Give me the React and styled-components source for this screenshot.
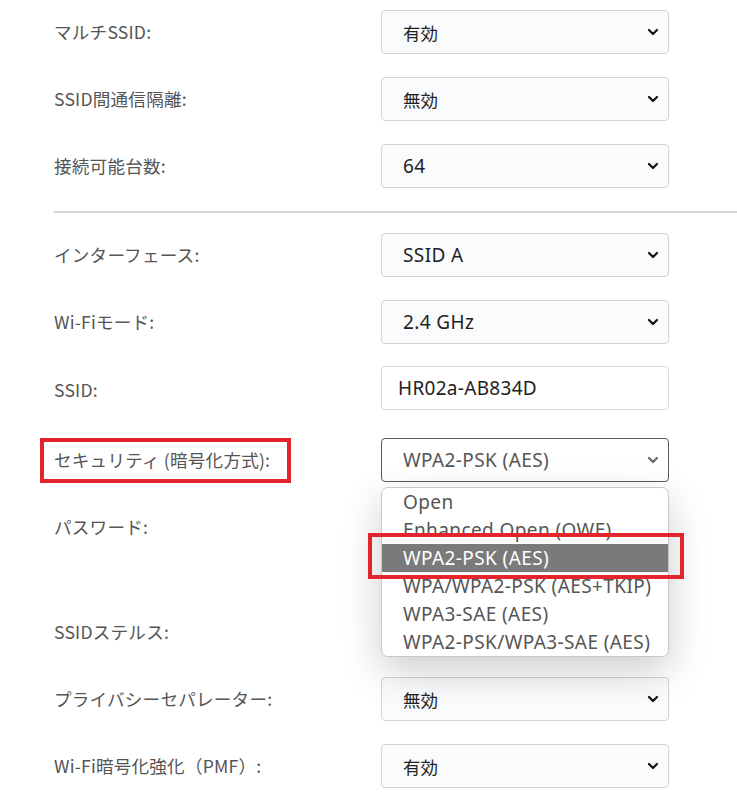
import React from "react";
import styled, { createGlobalStyle } from "styled-components";

const GlobalStyle = createGlobalStyle`
  html, body {
    margin: 0;
    padding: 0;
    background: #ffffff;
  }
  body {
    font-family: "Noto Sans", "Noto Sans CJK JP", sans-serif;
  }
`;

const Page = styled.div`
  width: 737px;
  height: 792px;
  overflow: hidden;
  padding: 10px 0 0 54px;
  box-sizing: border-box;
  display: flex;
  flex-direction: column;
  gap: 23px;
`;

const Row = styled.div`
  display: grid;
  grid-template-columns: 327px 288px;
  align-items: ${({ $top }) => ($top ? "start" : "center")};
  margin-top: ${({ $shift }) => $shift || 0}px;
  min-height: ${({ $tall }) => $tall || 44}px;
`;

const Label = styled.div`
  position: relative;
  font-family: "Noto Sans CJK JP", sans-serif;
  font-size: 17.6px;
  color: #555555;
  letter-spacing: 0.2px;
  line-height: 44px;
  height: 44px;
  padding-top: ${({ $drop }) => $drop || 0}px;
`;

const Divider = styled.div`
  height: 2px;
  background: #d6d6d6;
  margin: 0 0 -3px;
`;

const SelectBox = styled.div`
  position: relative;
  height: 44px;
  box-sizing: border-box;
  border: 1px solid ${({ $active }) => ($active ? "#5a5a5a" : "#d2d4d6")};
  border-radius: 4px;
  background: ${({ $active }) => ($active ? "#ffffff" : "#fafbfc")};
  display: flex;
  align-items: center;
  justify-content: space-between;
  padding: 0 9px 0 21px;
  color: ${({ $active }) => ($active ? "#555555" : "#222222")};
`;

const Value = styled.span`
  font-family: "Noto Sans", "Noto Sans CJK JP", sans-serif;
  font-size: ${({ $cjk }) => ($cjk ? "17.5px" : "19px")};
  letter-spacing: ${({ $cjk }) => ($cjk ? "0" : "0.4px")};
`;

const TextInput = styled.input`
  height: 44px;
  box-sizing: border-box;
  border: 1px solid #d8dadc;
  border-radius: 4px;
  background: #ffffff;
  padding: 0 0 0 16px;
  font-family: "Noto Sans", sans-serif;
  font-size: 19px;
  letter-spacing: 0.3px;
  color: #222222;
  outline: none;
`;

const Dropdown = styled.ul`
  position: absolute;
  top: 49px;
  left: 0;
  width: 288px;
  box-sizing: border-box;
  margin: 0;
  padding: 0;
  list-style: none;
  background: #ffffff;
  border: 1px solid #c8c8c8;
  border-radius: 7px;
  box-shadow: 0 14px 40px rgba(0, 0, 0, 0.2);
  z-index: 5;
`;

const Option = styled.li`
  position: relative;
  height: 28px;
  line-height: 28px;
  padding-left: 21px;
  font-size: 19px;
  letter-spacing: 0.4px;
  color: ${({ $selected }) => ($selected ? "#ffffff" : "#555555")};
  background: ${({ $selected }) => ($selected ? "#7a7a7a" : "transparent")};
  white-space: nowrap;
`;

const Mark = styled.div`
  position: absolute;
  border: 4px solid #e3242b;
  box-sizing: border-box;
  pointer-events: none;
  z-index: 6;
`;

const Chevron = ({ color = "#111" }) => (
  <svg width="12" height="12" viewBox="0 0 12 12">
    <polyline
      points="2,4 6,8 10,4"
      fill="none"
      stroke={color}
      strokeWidth="2.2"
      strokeLinecap="round"
      strokeLinejoin="round"
    />
  </svg>
);

const Select = ({ value, active, cjk }) => (
  <SelectBox $active={active}>
    <Value $cjk={cjk}>{value}</Value>
    <Chevron color={active ? "#666" : "#111"} />
  </SelectBox>
);

const options = [
  "Open",
  "Enhanced Open (OWE)",
  "WPA2-PSK (AES)",
  "WPA/WPA2-PSK (AES+TKIP)",
  "WPA3-SAE (AES)",
  "WPA2-PSK/WPA3-SAE (AES)",
];

export default function App() {
  return (
    <>
      <GlobalStyle />
      <Page>
        <Row>
          <Label>マルチSSID:</Label>
          <Select value="有効" cjk />
        </Row>
        <Row>
          <Label>SSID間通信隔離:</Label>
          <Select value="無効" cjk />
        </Row>
        <Row>
          <Label>接続可能台数:</Label>
          <Select value="64" />
        </Row>
        <Divider />
        <Row>
          <Label>インターフェース:</Label>
          <Select value="SSID A" />
        </Row>
        <Row>
          <Label>Wi-Fiモード:</Label>
          <Select value="2.4 GHz" />
        </Row>
        <Row $shift={-3}>
          <Label $drop={4}>SSID:</Label>
          <TextInput readOnly value="HR02a-AB834D" />
        </Row>
        <Row $shift={3}>
          <Label>
            セキュリティ (暗号化方式):
            <Mark style={{ left: -14, top: 0, width: 251, height: 45 }} />
          </Label>
          <div style={{ position: "relative" }}>
            <Select value="WPA2-PSK (AES)" active />
            <Dropdown>
              {options.map((o) => (
                <Option key={o} $selected={o === "WPA2-PSK (AES)"}>
                  {o}
                </Option>
              ))}
              <Mark style={{ left: -14, top: 45, width: 316, height: 46 }} />
            </Dropdown>
          </div>
        </Row>
        <Row $top $tall={82}>
          <Label>パスワード:</Label>
          <TextInput readOnly type="password" value="" />
        </Row>
        <Row>
          <Label>SSIDステルス:</Label>
          <Select value="" />
        </Row>
        <Row>
          <Label>プライバシーセパレーター:</Label>
          <Select value="無効" cjk />
        </Row>
        <Row>
          <Label>Wi-Fi暗号化強化（PMF）:</Label>
          <Select value="有効" cjk />
        </Row>
      </Page>
    </>
  );
}
